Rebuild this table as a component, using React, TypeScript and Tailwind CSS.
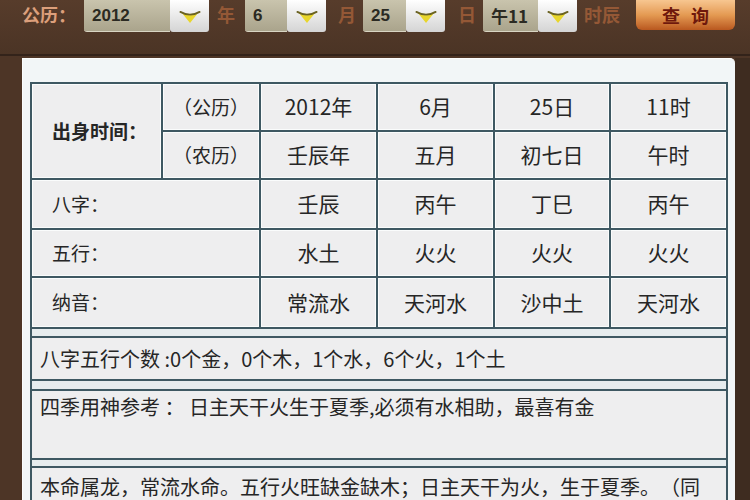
import React from "react";

const font = { fontFamily: '"Noto Sans CJK SC", "Noto Sans", sans-serif' };

function Arrow() {
  return (
    <div className="w-[39px] h-[32px] bg-gradient-to-b from-[#ffffff] to-[#d4d4d4] rounded-b-[3px] flex items-center justify-center">
      <svg width="22" height="15" viewBox="0 0 24 16">
        <path d="M3 4 Q12 9 21 4 L12 15 Z" fill="#e8d62c" />
        <path d="M1.5 3 Q12 9 22.5 3" stroke="#6a6222" strokeWidth="2" fill="none" strokeLinecap="round" />
      </svg>
    </div>
  );
}

function Box({ w, children }: { w: string; children: React.ReactNode }) {
  return (
    <div
      className={`${w} h-[32px] bg-gradient-to-b from-[#c9c4ad] to-[#aaa48c] border-b border-[#d9d5c3] rounded-bl-[3px] flex items-center pl-[8px] text-[17px] font-bold text-[#2b2a22]`}
      style={{ fontFamily: '"Liberation Sans", "Noto Sans CJK SC", sans-serif' }}
    >
      {children}
    </div>
  );
}

function Label({ children, ml, w }: { children: React.ReactNode; ml: string; w: string }) {
  return (
    <div className={`${ml} ${w} h-[28px] flex items-center text-[18px] text-[#945836] font-bold`} style={font}>
      {children}
    </div>
  );
}

const cell = "bg-[#eeeeef] border border-[#fafcfc] flex items-center text-[#262626] [text-spacing-trim:space-all]";
const val = `${cell} justify-center text-[21px]`;
const lab = `${cell} text-[19px] pl-[19px]`;
const sec = "w-[698px] border-2 border-[#3e5862] bg-[#eeeeef] pl-[8px] text-[20px] text-[#262626] [text-spacing-trim:space-all] whitespace-nowrap overflow-hidden";
const gapRow = "w-[698px] border-x-2 border-[#3e5862] bg-[#e6ecee]";

export default function App() {
  return (
    <div className="w-[750px] h-[500px] overflow-hidden bg-[#4d3526] relative" style={font}>
      {/* top bar */}
      <div className="h-[56px] flex items-start border-b-2 border-[#33231a] bg-gradient-to-b from-[#573c2b] to-[#4b3425]">
        <div className="ml-[22px] w-[62px] h-[28px] flex items-center text-[18px] font-bold text-[#dc9f7b]">公历：</div>
        <Box w="w-[86px]">2012</Box>
        <Arrow />
        <Label ml="ml-[8px]" w="w-[28px]">年</Label>
        <Box w="w-[42px]">6</Box>
        <Arrow />
        <Label ml="ml-[12px]" w="w-[25px]">月</Label>
        <Box w="w-[43px]">25</Box>
        <Arrow />
        <Label ml="ml-[13px]" w="w-[25px]">日</Label>
        <Box w="w-[55px]">
          <span style={font} className="font-bold">午11</span>
        </Box>
        <Arrow />
        <Label ml="ml-[7px]" w="w-[45px]">时辰</Label>
        <div className="ml-[7px] w-[99px] h-[30px] rounded-b-[6px] bg-gradient-to-b from-[#f7c690] via-[#e49a52] to-[#b9581f] flex items-center justify-center text-[18px] font-bold text-[#6e180c] tracking-[11px] pl-[11px]">
          查询
        </div>
      </div>

      {/* panel */}
      <div className="ml-[22px] mt-[2px] w-[713px] h-[460px] bg-[#f2f6f7] border-l border-t border-[#fbfdfd] rounded-tr-[5px] pl-[7px] pt-[23px]">
        <div className="w-[698px] grid grid-cols-[129px_96px_115px_115px_114px_115px] grid-rows-[46px_46px_48px_46px_49px] gap-[2px] p-[2px] bg-[#3e5862]">
          <div className={`${lab} row-span-2 font-bold text-[18px]`}>出身时间：</div>
          <div className={`${cell} justify-center text-[19px]`}>（公历）</div>
          <div className={val}>2012年</div>
          <div className={val}>6月</div>
          <div className={val}>25日</div>
          <div className={val}>11时</div>

          <div className={`${cell} justify-center text-[19px]`}>（农历）</div>
          <div className={val}>壬辰年</div>
          <div className={val}>五月</div>
          <div className={val}>初七日</div>
          <div className={val}>午时</div>

          <div className={`${lab} col-span-2`}>八字：</div>
          <div className={val}>壬辰</div>
          <div className={val}>丙午</div>
          <div className={val}>丁巳</div>
          <div className={val}>丙午</div>

          <div className={`${lab} col-span-2`}>五行：</div>
          <div className={val}>水土</div>
          <div className={val}>火火</div>
          <div className={val}>火火</div>
          <div className={val}>火火</div>

          <div className={`${lab} col-span-2`}>纳音：</div>
          <div className={val}>常流水</div>
          <div className={val}>天河水</div>
          <div className={val}>沙中土</div>
          <div className={val}>天河水</div>
        </div>

        <div className={`${gapRow} h-[7px]`} />
        <div className={`${sec} h-[45px] flex items-center`}>
          八字五行个数 :0个金，0个木，1个水，6个火，1个土
        </div>
        <div className={`${gapRow} h-[8px]`} />
        <div className={`${sec} h-[71px] pt-[2px] leading-[28px]`}>
          四季用神参考 ： 日主天干火生于夏季,必须有水相助，最喜有金
        </div>
        <div className={`${gapRow} h-[6px]`} />
        <div className={`${sec} h-[60px] pt-[5px] leading-[28px]`}>
          本命属龙，常流水命。五行火旺缺金缺木；日主天干为火，生于夏季。（同
        </div>
      </div>

      <div className="absolute right-0 top-[58px] w-[15px] h-[442px] bg-[#3e2c20]" />
    </div>
  );
}
